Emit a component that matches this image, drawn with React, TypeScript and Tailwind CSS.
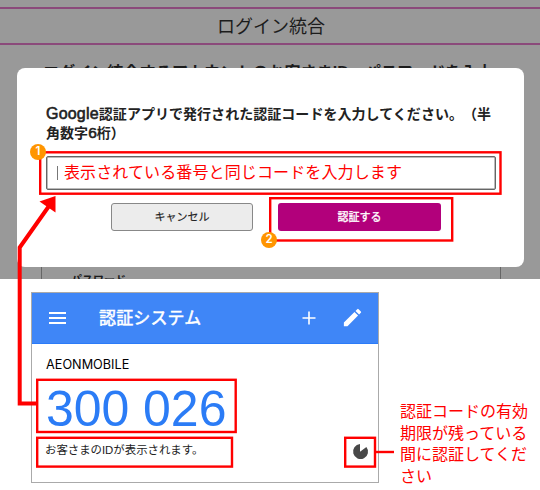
import React from "react";

function Badge({ n, className }: { n: number; className: string }) {
  return (
    <span
      className={`absolute flex h-4 w-4 items-center justify-center rounded-full bg-[#ff9500] font-['Inter'] text-[11.5px] font-semibold leading-none text-white ${className}`}
    >
      {n}
    </span>
  );
}

function LoginScreen() {
  return (
    <section className="relative h-[279px] shrink-0 overflow-hidden bg-[#999999] text-[#1c1c1c]">
      <div className="flex h-full flex-col pt-[7px]">
        <h1 className="flex h-[38px] shrink-0 items-center justify-center border-y-2 border-[#8b4a7b] pl-[2px] pt-px text-[18px] leading-none">
          ログイン統合
        </h1>
        <p className="mt-[18px] shrink-0 whitespace-nowrap pl-[43px] text-[16.1px] font-bold leading-[18px]">
          ログイン統合するアカウントのお客さまID・パスワードを入力
        </p>
        <div className="ml-[41px] mt-auto h-[46px] w-[460px] shrink-0 border-x border-[#666] pl-[29px] pt-[42px] text-[11px] font-bold leading-none">
          パスワード
        </div>
      </div>
      <div className="absolute left-[17px] top-[68px] flex h-[199px] w-[507px] flex-col rounded-[8px] bg-white px-[29px] pt-[37px]">
        <p className="whitespace-nowrap text-[14px] font-bold leading-[19px] tracking-[0.04px] text-[#222] [text-spacing-trim:space-all]">
          <span className="text-[16px] font-normal leading-none tracking-[0.2px] [-webkit-text-stroke:0.6px_#222]">Google</span>認証アプリで発行された認証コードを入力してください。（半
          <br />
          角数字<span className="text-[15.5px] font-normal leading-none [-webkit-text-stroke:0.6px_#222]">6</span>桁）
        </p>
        <div className="mt-[13px] flex h-[34px] w-[450px] shrink-0 items-center rounded-[2px] border border-[#666] pl-[10px] shadow-[inset_0_0_0_0.5px_#777]">
          <span className="h-[14px] w-px bg-[#777]" />
          <span className="ml-[6px] whitespace-nowrap text-[16px] leading-none tracking-[0.12px] text-[#ff0000]">
            表示されている番号と同じコードを入力します
          </span>
        </div>
        <div className="ml-[65px] mt-[13px] flex gap-[25px]">
          <button className="h-[28px] w-[142px] rounded-[3px] border border-[#888] bg-[#ececec] text-[11px] leading-none text-[#222] [-webkit-text-stroke:0.15px_#222]">
            キャンセル
          </button>
          <button className="h-[28px] w-[163px] rounded-[3px] bg-[#b2007b] text-[11px] leading-none text-white [-webkit-text-stroke:0.3px_#fff]">
            認証する
          </button>
        </div>
      </div>
    </section>
  );
}

function Authenticator() {
  return (
    <section className="ml-[31px] mt-[13px] flex h-[191px] w-[348px] shrink-0 flex-col border border-[#aaa] bg-white">
      <header className="flex h-[51px] shrink-0 items-center border-b border-[#2b7bf8] bg-[#3f86f7] text-white">
        <svg className="ml-[17px] h-[12px] w-[17px]" viewBox="0 0 17 12" stroke="#fff" strokeWidth="1.8">
          <path d="M0 1H17M0 6H17M0 11H17" />
        </svg>
        <h2 className="ml-[17px] w-[180px] pl-[16px] text-[17px] leading-none tracking-[0.15px] [-webkit-text-stroke:0.5px_#fff]">認証システム</h2>
        <svg className="ml-[39px] h-[14px] w-[14px]" viewBox="0 0 14 14" stroke="#fff" strokeWidth="1.6">
          <path d="M0.5 7H13.5M7 .5V13.5" />
        </svg>
        <svg className="mb-px ml-[25px] h-[23px] w-[23px]" viewBox="0 0 24 24" fill="#fff">
          <path d="M3 17.25V21h3.75L17.81 9.94l-3.75-3.75L3 17.25zM20.71 7.04a1 1 0 0 0 0-1.41l-2.34-2.34a1 1 0 0 0-1.41 0l-1.83 1.83 3.75 3.75 1.83-1.83z" />
        </svg>
      </header>
      <div className="flex flex-col pl-[14px] pt-[14px]">
        <span className="font-['Inter'] text-[12.7px] leading-[14px] text-black">AEONMOBILE</span>
        <span className="mt-[13px] font-['Liberation_Sans'] text-[50px] leading-[48px] tracking-[-0.05px] text-[#2b7cf6]">300 026</span>
        <span className="-ml-px mt-[10px] text-[11.4px] leading-[14px] text-[#222]">お客さまのIDが表示されます。</span>
      </div>
    </section>
  );
}

export default function App() {
  return (
    <main className="relative flex h-[490px] w-[540px] flex-col overflow-hidden bg-white font-['Liberation_Sans','Noto_Sans_CJK_JP',sans-serif]">
      <LoginScreen />
      <Authenticator />

      {/* Callout frames, connectors and the countdown dial */}
      <svg className="absolute inset-0 h-full w-full" viewBox="0 0 540 490" fill="none">
        <g stroke="#ff0000" strokeWidth="2.4">
          <rect x="40.2" y="152.3" width="460.3" height="41.4" />
          <rect x="270.2" y="198.2" width="182" height="42.3" />
          <rect x="37.2" y="379.8" width="198.5" height="52.2" />
          <rect x="37.2" y="437.8" width="194.8" height="28.8" />
          <rect x="345.2" y="437.8" width="29.8" height="28.8" />
          <path d="M375 452H394" />
        </g>
        <path d="M37 403.5H19.7V247.5L49 206" stroke="#ff0000" strokeWidth="4" />
        <path d="M55.5 196V212.5L39.5 201.5Z" fill="#ff0000" />
        <path d="M360 451.8V444.1A7.5 7.5 0 1 0 366.4 446.9Z" fill="#484848" />
      </svg>

      <Badge n={1} className="left-[30px] top-[144px]" />
      <Badge n={2} className="left-[261px] top-[232px]" />

      <p className="absolute left-[400px] top-[401px] whitespace-nowrap text-[16px] leading-[21.5px] text-[#ff0000]">
        認証コードの有効
        <br />
        期限が残っている
        <br />
        間に認証してくだ
        <br />
        さい
      </p>
    </main>
  );
}
